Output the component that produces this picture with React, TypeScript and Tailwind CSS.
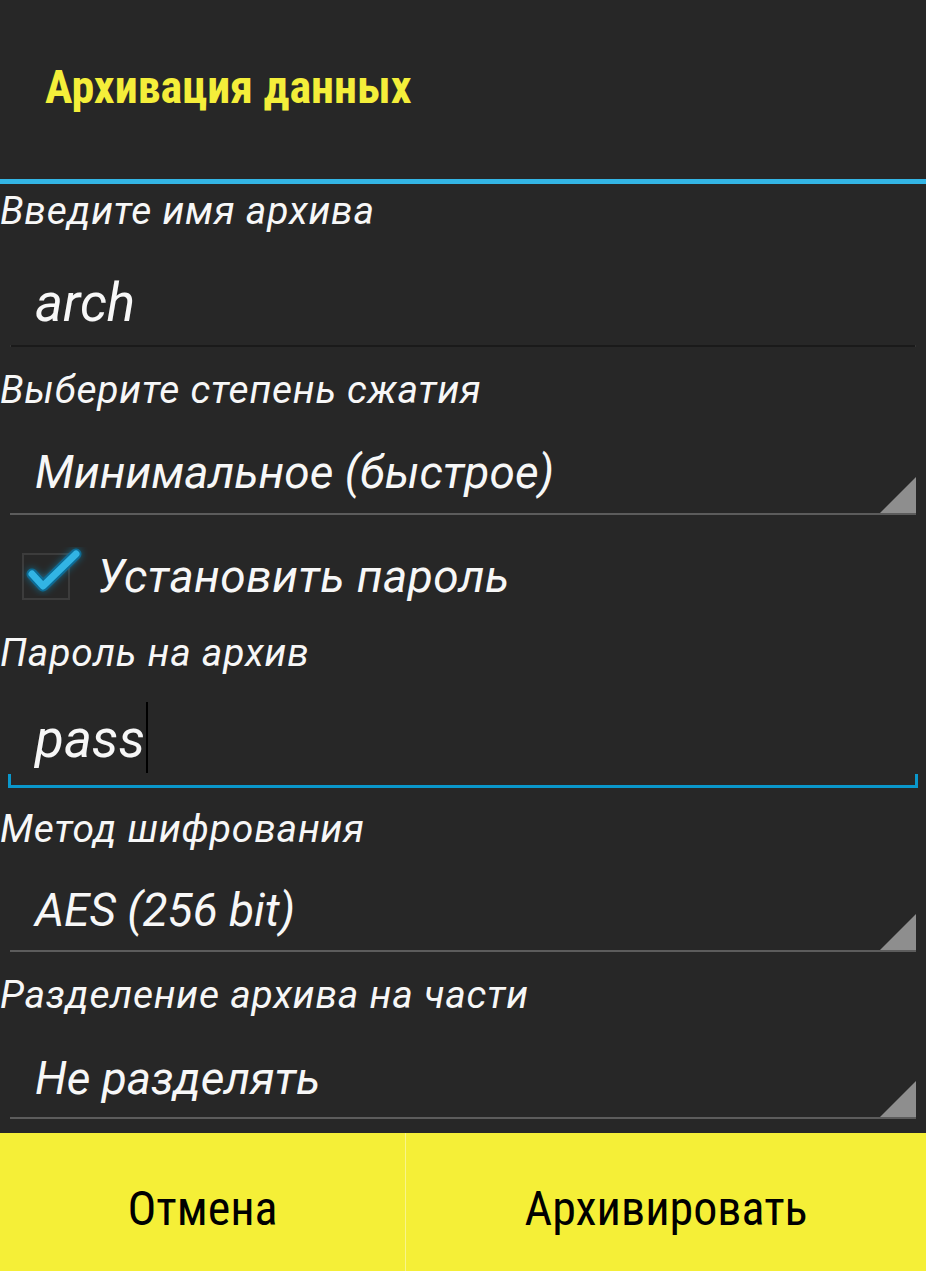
import React from "react";

const label =
  "text-[39px] leading-none italic tracking-[0.02em] text-[#f7f7f7] font-['Roboto',sans-serif]";
const value = "text-[46px] leading-none italic text-[#f7f7f7] font-['Roboto',sans-serif]";
const condensed = "font-['Roboto_Condensed',Roboto,sans-serif] [font-stretch:75%]";

function Label({ text, h }: { text: string; h: string }) {
  return (
    <div className={`flex items-center ${h}`}>
      <span className={label}>{text}</span>
    </div>
  );
}

function Spinner({ text, h }: { text: string; h: string }) {
  return (
    <div className="flex flex-col">
      <div className={`flex ${h} justify-between pl-[35px] pr-[10px]`}>
        <span className={`${value} self-center`}>{text}</span>
        <svg width="36" height="36" viewBox="0 0 36 36" className="self-end">
          <polygon points="36,0 36,36 0,36" fill="#8e8e8e" />
        </svg>
      </div>
      <div className="mx-[10px] h-[2px] bg-[#5c5c5c]" />
    </div>
  );
}

function CheckMark() {
  return (
    <svg width="66" height="54" viewBox="0 0 66 54" className="absolute -left-[2px] -top-[8px]">
      <defs>
        <filter id="glow" x="-30%" y="-30%" width="160%" height="160%">
          <feGaussianBlur stdDeviation="3.5" result="b" />
          <feFlood floodColor="#1aa7e0" floodOpacity="0.5" />
          <feComposite in2="b" operator="in" />
          <feMerge>
            <feMergeNode />
            <feMergeNode in="SourceGraphic" />
          </feMerge>
        </filter>
      </defs>
      <g filter="url(#glow)">
        <polyline
          points="10,27 21,39 54,7"
          fill="none"
          stroke="#0b6b94"
          strokeWidth="11"
          strokeLinecap="round"
          strokeLinejoin="round"
        />
        <polyline
          points="10,27 21,39 54,7"
          fill="none"
          stroke="#33b4e4"
          strokeWidth="7"
          strokeLinecap="round"
          strokeLinejoin="round"
        />
      </g>
    </svg>
  );
}

export default function App() {
  return (
    <div className="w-[926px] h-[1271px] bg-[#272727] flex flex-col overflow-hidden font-['Roboto',sans-serif]">
      {/* title */}
      <div className="h-[179px] flex items-center pl-[45px] pb-[6px]">
        <h1 className={`text-[46px] leading-none font-bold text-[#f4ee3a] ${condensed}`}>
          Архивация данных
        </h1>
      </div>
      <div className="h-[5px] bg-[#33b5e5]" />

      <Label text="Введите имя архива" h="h-[54px]" />
      {/* archive name */}
      <div className="flex flex-col h-[111px] pt-[39px]">
        <div className="h-[53px] pl-[35px]">
          <span className="text-[53px] leading-none italic text-[#f7f7f7]">arch</span>
        </div>
        <div className="mt-[15px] mx-[10px] h-[2px] bg-[#1a1a1a] border-x border-[#343434]" />
      </div>

      <Label text="Выберите степень сжатия" h="h-[82px]" />
      <Spinner text="Минимальное (быстрое)" h="h-[82px]" />

      {/* password checkbox */}
      <div className="h-[122px] flex items-center pl-[22px] gap-[27px]">
        <div className="relative w-[48px] h-[47px] border-2 border-[#3c3c3c]">
          <CheckMark />
        </div>
        <span className="text-[46px] leading-none italic tracking-[0.01em] text-[#f7f7f7]">
          Установить пароль
        </span>
      </div>

      <Label text="Пароль на архив" h="h-[32px]" />
      {/* password input (focused) */}
      <div className="flex flex-col h-[119px] pt-[44px]">
        <div className="h-[53px] pl-[35px] flex items-start">
          <span className="text-[53px] leading-none italic text-[#f7f7f7]">pass</span>
          <span className="w-[2px] h-[71px] -mt-[11px] ml-[1px] bg-black" />
        </div>
        <div className="mt-[8px] mx-[8px] h-[14px] border-x-[3px] border-b-[3px] border-[#0a97cb]" />
      </div>

      <Label text="Метод шифрования" h="h-[82px]" />
      <Spinner text="AES (256 bit)" h="h-[80px]" />

      <Label text="Разделение архива на части" h="h-[86px]" />
      <Spinner text="Не разделять" h="h-[79px]" />

      <div className="h-[14px]" />
      {/* buttons */}
      <div className="flex-1 flex bg-[#f5ef37]">
        <button className={`w-[405px] flex items-center justify-center pt-[14px] text-[48px] text-black ${condensed}`}>
          Отмена
        </button>
        <div className="w-px bg-[#f8f58a]" />
        <button className={`flex-1 flex items-center justify-center pt-[14px] text-[48px] text-black ${condensed}`}>
          Архивировать
        </button>
      </div>
    </div>
  );
}
